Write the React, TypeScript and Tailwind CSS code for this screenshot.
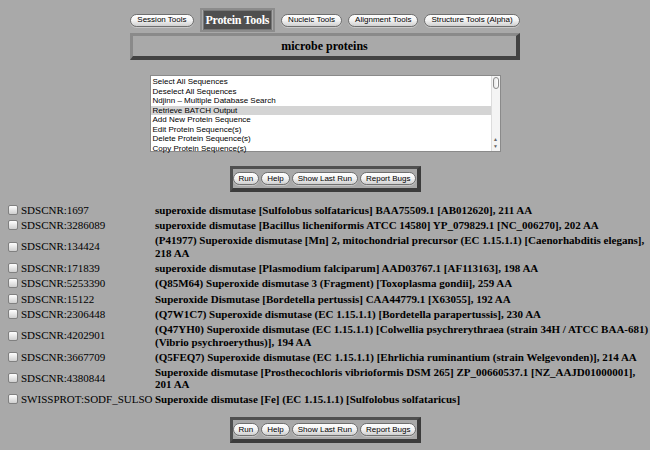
const TABS_LEFT = ['Session Tools'];
const TABS_RIGHT = ['Nucleic Tools', 'Alignment Tools', 'Structure Tools (Alpha)'];

const ACTIONS = [
    'Select All Sequences',
    'Deselect All Sequences',
    'Ndjinn \u2013 Multiple Database Search',
    'Retrieve BATCH Output',
    'Add New Protein Sequence',
    'Edit Protein Sequence(s)',
    'Delete Protein Sequence(s)',
    'Copy Protein Sequence(s)',
];

// descriptions keep the line breaks of the original page
const SEQUENCES = [
    { id: 'SDSCNR:1697', desc: ['superoxide dismutase [Sulfolobus solfataricus] BAA75509.1 [AB012620], 211 AA'] },
    { id: 'SDSCNR:3286089', desc: ['superoxide dismutase [Bacillus licheniformis ATCC 14580] YP_079829.1 [NC_006270], 202 AA'] },
    { id: 'SDSCNR:134424', desc: ['(P41977) Superoxide dismutase [Mn] 2, mitochondrial precursor (EC 1.15.1.1) [Caenorhabditis elegans],', '218 AA'] },
    { id: 'SDSCNR:171839', desc: ['superoxide dismutase [Plasmodium falciparum] AAD03767.1 [AF113163], 198 AA'] },
    { id: 'SDSCNR:5253390', desc: ['(Q85M64) Superoxide dismutase 3 (Fragment) [Toxoplasma gondii], 259 AA'] },
    { id: 'SDSCNR:15122', desc: ['Superoxide Dismutase [Bordetella pertussis] CAA44779.1 [X63055], 192 AA'] },
    { id: 'SDSCNR:2306448', desc: ['(Q7W1C7) Superoxide dismutase (EC 1.15.1.1) [Bordetella parapertussis], 230 AA'] },
    { id: 'SDSCNR:4202901', desc: ['(Q47YH0) Superoxide dismutase (EC 1.15.1.1) [Colwellia psychrerythraea (strain 34H / ATCC BAA-681)', '(Vibrio psychroerythus)], 194 AA'] },
    { id: 'SDSCNR:3667709', desc: ['(Q5FEQ7) Superoxide dismutase (EC 1.15.1.1) [Ehrlichia ruminantium (strain Welgevonden)], 214 AA'] },
    { id: 'SDSCNR:4380844', desc: ['Superoxide dismutase [Prosthecochloris vibrioformis DSM 265] ZP_00660537.1 [NZ_AAJD01000001],', '201 AA'] },
    { id: 'SWISSPROT:SODF_SULSO', desc: ['Superoxide dismutase [Fe] (EC 1.15.1.1) [Sulfolobus solfataricus]'] },
];

const SERIF = { fontFamily: '"Liberation Serif", "Times New Roman", serif' };

function Pill({ label, wide }: { label: string; wide?: boolean }) {
    return (
        <button className={`h-[13px] ${wide ? 'px-[6px]' : 'px-[5px]'} rounded-full border border-[#6f6f6f] bg-gradient-to-b from-white via-[#f2f2f2] to-[#cfcfcf] text-[8px] leading-none text-black flex items-center shadow-[0_1px_0_#c8c8c8]`}>
            {label}
        </button>
    );
}

function ButtonBar() {
    return (
        <div className="mx-auto w-[191px] h-[26px] border-[3px] border-t-[#505050] border-l-[#505050] border-b-[#3c3c3c] border-r-[#3c3c3c] border-b-[4px] border-r-[4px] flex items-center justify-center gap-[2px]">
            <Pill label="Run" />
            <Pill label="Help" />
            <Pill label="Show Last Run" />
            <Pill label="Report Bugs" />
        </div>
    );
}

function Checkbox() {
    return (
        <span className="block w-[10px] h-[10px] rounded-[2px] border border-[#808080] bg-gradient-to-b from-white to-[#cfcfcf]" />
    );
}

export default function App() {
    return (
        <div className="w-[650px] h-[450px] overflow-hidden bg-[#a9a9a9] text-black" style={{ fontFamily: '"Liberation Sans", Arial, sans-serif' }}>

            <div className="flex justify-center items-center gap-[6px] pt-[8px] h-[32px]">
                {TABS_LEFT.map((t) => <Pill key={t} label={t} wide />)}
                <div className="h-[24px] px-[1px] border-2 border-[#8c8c8c] flex items-center">
                    <div className="h-[20px] px-[2px] bg-[#4f4f4f] border border-[#777] flex items-center text-white font-bold text-[12px] tracking-[-0.3px]" style={SERIF}>
                        Protein Tools
                    </div>
                </div>
                {TABS_RIGHT.map((t) => <Pill key={t} label={t} wide />)}
            </div>

            <div className="mx-auto mt-[1px] w-[390px] h-[27px] border-[3px] border-t-[#8a8a8a] border-l-[#8a8a8a] border-b-[#424242] border-r-[#424242] border-b-[4px] border-r-[4px] flex items-center justify-center font-bold text-[12px]" style={SERIF}>
                microbe proteins
            </div>

            <div className="mx-auto mt-[15px] w-[351px] h-[77px] bg-white border border-[#8a8a8a] flex">
                <div className="flex-1 pt-[1px]">
                    {ACTIONS.map((a, i) => (
                        <div key={a} className={`h-[9.5px] leading-[9.5px] text-[8px] pl-[2px] whitespace-nowrap ${i === 3 ? 'bg-[#d4d4d4]' : ''}`}>
                            {a}
                        </div>
                    ))}
                </div>
                <div className="w-[9px] border-l border-[#dcdcdc] bg-[#f4f4f4] flex flex-col items-center justify-between py-[1px]">
                    <div className="w-[6px] h-[12px] rounded-full border border-[#8a8a8a] bg-gradient-to-r from-[#e8e8e8] to-white" />
                    <div className="flex flex-col items-center text-[5px] leading-[7px] text-[#666]">
                        <span>▲</span>
                        <span>▼</span>
                    </div>
                </div>
            </div>

            <div className="mt-[14px]">
                <ButtonBar />
            </div>

            <div className="mt-[10px] pl-[8px] grid grid-cols-[10px_131px_1fr] gap-x-[3px] leading-[12.5px] text-[11px]" style={SERIF}>
                {SEQUENCES.map((s) => (
                    <div key={s.id} className="contents">
                        <div className="flex items-center min-h-[15.5px]"><Checkbox /></div>
                        <div className="flex items-center whitespace-nowrap">{s.id}</div>
                        <div className="flex flex-col justify-center py-[1px] font-bold whitespace-nowrap">
                            {s.desc.map((line) => <span key={line}>{line}</span>)}
                        </div>
                    </div>
                ))}
            </div>

            <div className="mt-[10px]">
                <ButtonBar />
            </div>
        </div>
    );
}
